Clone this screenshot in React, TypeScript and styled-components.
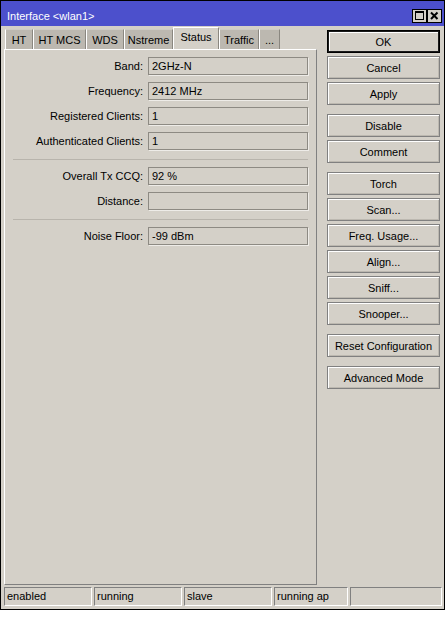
import React from 'react'
import styled, { createGlobalStyle } from 'styled-components'

const GlobalStyle = createGlobalStyle`
  html, body {
    margin: 0;
    padding: 0;
    background: #fff;
  }
  body {
    font-family: "Liberation Sans", Arial, sans-serif;
    font-size: 11px;
    color: #000;
  }
  * {
    box-sizing: border-box;
  }
`

const Window = styled.div`
  width: 445px;
  height: 610px;
  border: 1px solid #000;
  background: #d4d0c8;
  box-shadow: 0 3px 0 #808080;
  display: flex;
  flex-direction: column;
`

const TitleBar = styled.div`
  height: 25px;
  background: #4c50cc;
  display: flex;
  align-items: center;
  justify-content: space-between;
  padding: 5px 2px 0 6px;
`

const Title = styled.span`
  color: #fff;
  font-size: 11px;
`

const TitleButtons = styled.div`
  display: flex;
`

const TitleButton = styled.div`
  width: 15px;
  height: 14px;
  border: 1px solid #000;
  background: #d4d0c8;
  display: flex;
  align-items: center;
  justify-content: center;
`

const Main = styled.div`
  height: 559px;
  display: flex;
  padding-right: 4px;
`

const LeftCol = styled.div`
  width: 313px;
  margin-left: 3px;
  display: flex;
  flex-direction: column;
`

const TabStrip = styled.div`
  height: 23px;
  display: flex;
  align-items: flex-end;
  padding-left: 1px;
`

const Tab = styled.div<{ $w: number; $active?: boolean }>`
  width: ${p => p.$w}px;
  height: ${p => (p.$active ? 22 : 20)}px;
  background: ${p => (p.$active ? '#d4d0c8' : '#bcb8b0')};
  border-top: 1px solid ${p => (p.$active ? '#fff' : '#cfccc5')};
  border-left: 1px solid #fff;
  border-right: 1px solid #8a8780;
  display: flex;
  align-items: center;
  justify-content: center;
  padding-bottom: ${p => (p.$active ? 3 : 0)}px;
  white-space: nowrap;
`

const Panel = styled.div`
  flex: 1;
  border-top: 1px solid #fff;
  border-left: 1px solid #fff;
  border-right: 1px solid #808080;
  border-bottom: 1px solid #808080;
  padding: 7px 8px 0 8px;
`

const FieldGroup = styled.div`
  display: flex;
  flex-direction: column;
  gap: 7px;
`

const FieldRow = styled.div`
  display: grid;
  grid-template-columns: 130px 1fr;
  column-gap: 5px;
  align-items: center;
  height: 18px;
`

const Label = styled.span`
  text-align: right;
  white-space: nowrap;
`

const Value = styled.div`
  height: 18px;
  border: 1px solid #8d8a83;
  box-shadow: 1px 1px 0 #eeece8;
  padding: 0 3px;
  line-height: 16px;
  white-space: nowrap;
`

const Separator = styled.div`
  height: 1px;
  background: #b8b4ac;
  margin: 9px 0 7px;
`

const RightCol = styled.div`
  width: 113px;
  margin-left: 10px;
  padding-top: 4px;
  display: flex;
  flex-direction: column;
  gap: 9px;
`

const ButtonGroup = styled.div`
  display: flex;
  flex-direction: column;
  gap: 3px;
`

const Button = styled.div<{ $default?: boolean }>`
  height: 23px;
  border: 1px solid ${p => (p.$default ? '#000' : '#808080')};
  box-shadow: ${p =>
    p.$default
      ? 'inset 0 0 0 1px #1a1a1a, inset 1px 1px 0 1px #fff'
      : 'inset 1px 1px 0 #fff, inset -1px -1px 0 #bcb8b0'};
  display: flex;
  align-items: center;
  justify-content: center;
  white-space: nowrap;
`

const StatusBar = styled.div`
  margin-top: 2px;
  height: 19px;
  display: flex;
  gap: 2px;
  padding: 0 2px 0 3px;
`

const StatusCell = styled.div<{ $w?: number }>`
  ${p => (p.$w ? `width: ${p.$w}px;` : 'flex: 1;')}
  height: 19px;
  border-top: 1px solid #808080;
  border-left: 1px solid #808080;
  border-right: 1px solid #fff;
  border-bottom: 1px solid #fff;
  padding-left: 2px;
  line-height: 17px;
  white-space: nowrap;
`

const tabs = [
  { name: 'HT', w: 28 },
  { name: 'HT MCS', w: 53 },
  { name: 'WDS', w: 38 },
  { name: 'Nstreme', w: 49 },
  { name: 'Status', w: 46, active: true },
  { name: 'Traffic', w: 40 },
  { name: '...', w: 21 },
]

const fieldGroups = [
  [
    ['Band:', '2GHz-N'],
    ['Frequency:', '2412 MHz'],
    ['Registered Clients:', '1'],
    ['Authenticated Clients:', '1'],
  ],
  [
    ['Overall Tx CCQ:', '92 %'],
    ['Distance:', ''],
  ],
  [['Noise Floor:', '-99 dBm']],
]

const buttonGroups = [
  ['OK', 'Cancel', 'Apply'],
  ['Disable', 'Comment'],
  ['Torch', 'Scan...', 'Freq. Usage...', 'Align...', 'Sniff...', 'Snooper...'],
  ['Reset Configuration'],
  ['Advanced Mode'],
]

const statuses = [
  { text: 'enabled', w: 88 },
  { text: 'running', w: 88 },
  { text: 'slave', w: 88 },
  { text: 'running ap', w: 74 },
  { text: '' },
]

export default function App() {
  return (
    <>
      <GlobalStyle />
      <Window>
        <TitleBar>
          <Title>Interface &lt;wlan1&gt;</Title>
          <TitleButtons>
            <TitleButton>
              <svg width="11" height="10" viewBox="0 0 11 10">
                <rect x="1.5" y="0.5" width="8" height="8" fill="none" stroke="#000" />
                <line x1="1.5" y1="1.5" x2="9.5" y2="1.5" stroke="#000" />
              </svg>
            </TitleButton>
            <TitleButton>
              <svg width="11" height="10" viewBox="0 0 11 10">
                <path d="M2 1.5 L8.5 8 M8.5 1.5 L2 8" stroke="#000" strokeWidth="2" />
              </svg>
            </TitleButton>
          </TitleButtons>
        </TitleBar>
        <Main>
          <LeftCol>
            <TabStrip>
              {tabs.map(t => (
                <Tab key={t.name} $w={t.w} $active={t.active}>
                  {t.name}
                </Tab>
              ))}
            </TabStrip>
            <Panel>
              {fieldGroups.map((group, gi) => (
                <React.Fragment key={gi}>
                  {gi > 0 && <Separator />}
                  <FieldGroup>
                    {group.map(([label, value]) => (
                      <FieldRow key={label}>
                        <Label>{label}</Label>
                        <Value>{value}</Value>
                      </FieldRow>
                    ))}
                  </FieldGroup>
                </React.Fragment>
              ))}
            </Panel>
          </LeftCol>
          <RightCol>
            {buttonGroups.map((group, gi) => (
              <ButtonGroup key={gi}>
                {group.map(b => (
                  <Button key={b} $default={b === 'OK'}>
                    {b}
                  </Button>
                ))}
              </ButtonGroup>
            ))}
          </RightCol>
        </Main>
        <StatusBar>
          {statuses.map((s, i) => (
            <StatusCell key={i} $w={s.w}>
              {s.text}
            </StatusCell>
          ))}
        </StatusBar>
      </Window>
    </>
  )
}
